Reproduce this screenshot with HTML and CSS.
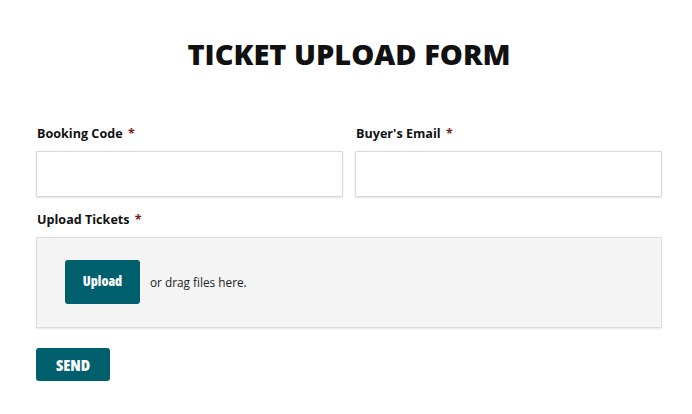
FILE: index.html
```html
<!DOCTYPE html>
<html>
<head>
<meta charset="utf-8">
<link rel="stylesheet" href="styles.css">
</head>
<body>
<div class="page">
  <h1 class="title">TICKET UPLOAD FORM</h1>
  <div class="row">
    <div class="field">
      <label class="label">Booking Code <span class="req">*</span></label>
      <input class="input" type="text">
    </div>
    <div class="field">
      <label class="label">Buyer's Email <span class="req">*</span></label>
      <input class="input" type="text">
    </div>
  </div>
  <div class="field upload-field">
    <label class="label">Upload Tickets <span class="req">*</span></label>
    <div class="dropzone">
      <button class="btn upload-btn" type="button">Upload</button>
      <span class="drag">or drag files here.</span>
    </div>
  </div>
  <button class="btn send-btn" type="button">SEND</button>
</div>
</body>
</html>
```
FILE: styles.css
```css
html, body {
  margin: 0;
  padding: 0;
  background: #ffffff;
}
body {
  font-family: "Open Sans", "Liberation Sans", sans-serif;
  color: #111111;
}
.page {
  width: 626px;
  padding: 0 30px 0 36px;
}
.title {
  margin: 0;
  padding-top: 34px;
  text-align: center;
  font-size: 29px;
  font-weight: 800;
  line-height: 40px;
  letter-spacing: 0;
  color: #111;
}
.row {
  display: flex;
  gap: 12px;
  margin-top: 51px;
}
.field {
  flex: 1;
  display: flex;
  flex-direction: column;
}
.label {
  font-size: 12.6px;
  font-weight: 700;
  line-height: 18px;
  padding-left: 1px;
  margin-bottom: 8px;
  color: #111;
}
.req {
  color: #7a1a1a;
  margin-left: 2px;
}
.input {
  box-sizing: border-box;
  height: 46px;
  border: 1px solid #d9d9d9;
  box-shadow: 0 1px 2px rgba(0,0,0,0.12);
  border-radius: 1px;
  background: #fff;
  margin: 0;
  padding: 0 10px;
  width: 100%;
}
.upload-field {
  margin-top: 14px;
}
.dropzone {
  box-sizing: border-box;
  height: 91px;
  background: #f4f4f4;
  border: 1px solid #dddddd;
  box-shadow: 0 1px 2px rgba(0,0,0,0.1);
  display: flex;
  align-items: center;
  padding: 0 0 2px 28px;
  gap: 10px;
}
.btn {
  background: #005f6c;
  color: #fff;
  border: none;
  border-radius: 3px;
  font-family: "Open Sans", "Liberation Sans", sans-serif;
  font-weight: 800;
  font-stretch: 75%;
  padding: 0;
  cursor: pointer;
}
.upload-btn {
  width: 75px;
  height: 44px;
  font-size: 13.5px;
  padding-bottom: 1px;
}
.drag {
  font-size: 11.8px;
  color: #222;
}
.send-btn {
  margin-top: 20px;
  width: 74px;
  height: 33px;
  font-size: 16px;
}
```
